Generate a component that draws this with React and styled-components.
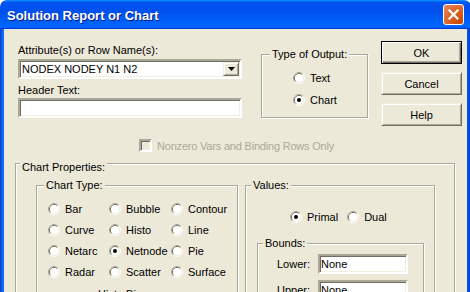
import React from "react";
import styled, { createGlobalStyle, css } from "styled-components";

const GlobalStyle = createGlobalStyle`
  html, body {
    margin: 0;
    padding: 0;
    overflow: hidden;
    background: #ffffff;
  }
  body {
    font-family: "Liberation Sans", Arial, sans-serif;
    font-size: 11px;
  }
`;

// classic 3d edges with the xp colour scheme
const sunken = css`
  box-sizing: border-box;
  border: 2px solid;
  border-color: #aca899 #ffffff #ffffff #aca899;
  box-shadow: inset 1px 1px 0 #716f64, inset -1px -1px 0 #f1efe2;
`;

const raised = css`
  box-sizing: border-box;
  border: 1px solid;
  border-color: #f1efe2 #716f64 #716f64 #f1efe2;
  box-shadow: inset 1px 1px 0 #ffffff, inset -1px -1px 0 #aca899;
  background: #ece9d8;
`;

const Radio = ({ checked }) => (
  <RadioIcon viewBox="0 0 12 12" width="12" height="12">
    <path d="M2.11 9.89 A5.5 5.5 0 0 1 9.89 2.11" stroke="#aca899" fill="none" />
    <path d="M9.89 2.11 A5.5 5.5 0 0 1 2.11 9.89" stroke="#ffffff" fill="none" />
    <path d="M2.82 9.18 A4.5 4.5 0 0 1 9.18 2.82" stroke="#716f64" fill="none" />
    <path d="M9.18 2.82 A4.5 4.5 0 0 1 2.82 9.18" stroke="#f1efe2" fill="none" />
    <circle cx="6" cy="6" r="4" fill="#ffffff" />
    {checked && <circle cx="6" cy="6" r="2" fill="#000000" />}
  </RadioIcon>
);

const Option = ({ label, checked }) => (
  <OptionRow>
    <Radio checked={checked} />
    <OptionText>{label}</OptionText>
  </OptionRow>
);

const chartTypes = [
  ["Bar", false],
  ["Bubble", false],
  ["Contour", false],
  ["Curve", false],
  ["Histo", false],
  ["Line", false],
  ["Netarc", false],
  ["Netnode", true],
  ["Pie", false],
  ["Radar", false],
  ["Scatter", false],
  ["Surface", false],
];

const App = () => {
  return (
    <>
      <GlobalStyle />
      <Window>
        <TitleBar>
          <Title>Solution Report or Chart</Title>
          <CloseButton>
            <svg viewBox="0 0 21 21" width="21" height="21">
              <path
                d="M6.5 6.5 L14.5 14.5 M14.5 6.5 L6.5 14.5"
                stroke="#ffffff"
                strokeWidth="2.2"
                strokeLinecap="square"
              />
            </svg>
          </CloseButton>
        </TitleBar>
        <Frame>
          <Client>
            <TopRow>
              <LeftCol>
                <Label>Attribute(s) or Row Name(s):</Label>
                <Combo>
                  <ComboText>NODEX NODEY N1 N2</ComboText>
                  <DropButton>
                    <svg viewBox="0 0 7 4" width="7" height="4">
                      <path d="M0 0 H7 L3.5 4 Z" fill="#000000" />
                    </svg>
                  </DropButton>
                </Combo>
                <Label $gap={5}>Header Text:</Label>
                <TextField $gap={1} />
              </LeftCol>

              <OutputGroup>
                <Legend $indent={8}>Type of Output:</Legend>
                <OutputList>
                  <Option label="Text" />
                  <Option label="Chart" checked />
                </OutputList>
              </OutputGroup>

              <ButtonCol>
                <Button $default>OK</Button>
                <Button>Cancel</Button>
                <Button>Help</Button>
              </ButtonCol>
            </TopRow>

            <CheckRow>
              <CheckBox />
              <DisabledText>Nonzero Vars and Binding Rows Only</DisabledText>
            </CheckRow>

            <PropsGroup>
              <Legend $indent={4} $drop={4}>
                Chart Properties:
              </Legend>
              <PropsBody>
                <ChartTypeGroup>
                  <Legend $indent={7}>Chart Type:</Legend>
                  <TypeGrid>
                    {chartTypes.map(([name, on]) => (
                      <Option key={name} label={name} checked={on} />
                    ))}
                  </TypeGrid>
                  <HistoRow>Histo Bins:</HistoRow>
                </ChartTypeGroup>

                <ValuesGroup>
                  <Legend $indent={5}>Values:</Legend>
                  <ValueRow>
                    <Option label="Primal" checked />
                    <Option label="Dual" />
                  </ValueRow>
                  <BoundsGroup>
                    <Legend $indent={5}>Bounds:</Legend>
                    <BoundsBody>
                      <BoundRow>
                        <BoundLabel>Lower:</BoundLabel>
                        <BoundInput>None</BoundInput>
                      </BoundRow>
                      <BoundRow>
                        <BoundLabel>Upper:</BoundLabel>
                        <BoundInput>None</BoundInput>
                      </BoundRow>
                    </BoundsBody>
                  </BoundsGroup>
                </ValuesGroup>
              </PropsBody>
            </PropsGroup>
          </Client>
        </Frame>
      </Window>
    </>
  );
};

const Window = styled.div`
  width: 471px;
  height: 292px;
  display: flex;
  flex-direction: column;
  overflow: hidden;
`;

const TitleBar = styled.div`
  height: 29px;
  flex-shrink: 0;
  display: flex;
  align-items: center;
  justify-content: space-between;
  padding: 0 7px 0 7px;
  box-sizing: border-box;
  border-radius: 7px 7px 0 0;
  background: linear-gradient(
    to bottom,
    #0997ff 0%,
    #0053ee 8%,
    #0050ee 40%,
    #0066ff 88%,
    #0066ff 93%,
    #005bff 95%,
    #003dd7 96%,
    #003dd7 100%
  );
`;

const Title = styled.div`
  color: #ffffff;
  font-family: "Liberation Sans", Arial, sans-serif;
  font-weight: bold;
  font-size: 13px;
  text-shadow: 1px 1px 0 #0a1883;
  padding-top: 1px;
`;

const CloseButton = styled.div`
  width: 21px;
  height: 21px;
  box-sizing: border-box;
  border: 1px solid #ffffff;
  border-radius: 3px;
  background: radial-gradient(
    circle at 90% 90%,
    #cc4600 0%,
    #dc6527 55%,
    #e38c6a 100%
  );
  display: flex;
  align-items: center;
  justify-content: center;
  svg {
    margin: -1px;
  }
`;

const Frame = styled.div`
  flex: 1;
  display: flex;
  padding: 0 4px;
  background: linear-gradient(
    to right,
    #0831d9 0px,
    #0855dd 1px,
    #166aee 3px,
    #0055ea calc(100% - 3px),
    #0831d9 100%
  );
`;

const Client = styled.div`
  flex: 1;
  background: #ece9d8;
  display: flex;
  flex-direction: column;
`;

const TopRow = styled.div`
  display: flex;
  align-items: flex-start;
  padding: 12px 0 0 14px;
`;

const LeftCol = styled.div`
  width: 224px;
  margin-top: 3px;
  display: flex;
  flex-direction: column;
`;

const Label = styled.div`
  height: 13px;
  line-height: 13px;
  color: #000000;
  margin-top: ${(p) => p.$gap || 0}px;
`;

const Combo = styled.div`
  ${sunken};
  margin-top: 2px;
  height: 20px;
  background: #ffffff;
  display: flex;
  align-items: stretch;
  padding: 1px;
`;

const ComboText = styled.div`
  flex: 1;
  line-height: 14px;
  padding-left: 1px;
  color: #000000;
`;

const DropButton = styled.div`
  ${raised};
  width: 16px;
  display: flex;
  align-items: center;
  justify-content: center;
`;

const TextField = styled.div`
  ${sunken};
  margin-top: ${(p) => p.$gap || 0}px;
  height: 20px;
  background: #ffffff;
`;

const Fieldset = styled.fieldset`
  margin: 0;
  padding: 0;
  min-width: 0;
  box-sizing: border-box;
  border: 1px solid #aca899;
  box-shadow: inset 1px 1px 0 #ffffff, 1px 1px 0 #ffffff;
`;

const Legend = styled.legend`
  padding: 0 2px;
  margin-left: ${(p) => p.$indent}px;
  line-height: 13px;
  font-size: 11px;
  background: #ece9d8;
  color: #000000;
  position: relative;
  top: ${(p) => p.$drop || 0}px;
`;

const OutputGroup = styled(Fieldset)`
  width: 107px;
  height: 70px;
  margin-left: 19px;
  margin-top: 7px;
`;

const OutputList = styled.div`
  display: flex;
  flex-direction: column;
  gap: 6px;
  padding: 9px 0 0 31px;
`;

const OptionRow = styled.div`
  display: flex;
  align-items: center;
  height: 16px;
`;

const RadioIcon = styled.svg`
  flex-shrink: 0;
  display: block;
`;

const OptionText = styled.span`
  margin-left: 5px;
  color: #000000;
  white-space: nowrap;
`;

const ButtonCol = styled.div`
  margin-left: 13px;
  display: flex;
  flex-direction: column;
  gap: 8px;
`;

const Button = styled.div`
  ${raised};
  width: 81px;
  height: 23px;
  display: flex;
  align-items: center;
  justify-content: center;
  color: #000000;
  ${(p) =>
    p.$default &&
    css`
      border: 1px solid #000000;
      box-shadow: inset 1px 1px 0 #ffffff, inset -1px -1px 0 #716f64,
        inset -2px -2px 0 #aca899;
    `}
`;

const CheckRow = styled.div`
  display: flex;
  align-items: center;
  height: 13px;
  margin-top: 13px;
  padding-left: 135px;
`;

const CheckBox = styled.div`
  ${sunken};
  width: 13px;
  height: 13px;
  background: #ece9d8;
`;

const DisabledText = styled.span`
  margin-left: 5px;
  color: #aca899;
  letter-spacing: -0.2px;
`;

const PropsGroup = styled(Fieldset)`
  width: 440px;
  margin: 5px 0 0 11px;
  flex: 1;
`;

const PropsBody = styled.div`
  display: flex;
  align-items: flex-start;
  gap: 7px;
  padding: 9px 0 0 20px;
`;

const ChartTypeGroup = styled(Fieldset)`
  width: 202px;
  height: 130px;
`;

const TypeGrid = styled.div`
  display: grid;
  grid-template-columns: 61px 62px auto;
  row-gap: 5px;
  padding: 9px 0 0 11px;
`;

const HistoRow = styled.div`
  margin: 8px 0 0 61px;
  line-height: 13px;
  color: #000000;
`;

const ValuesGroup = styled(Fieldset)`
  width: 190px;
  height: 130px;
`;

const ValueRow = styled.div`
  display: flex;
  gap: 9px;
  padding: 17px 0 0 44px;
`;

const BoundsGroup = styled(Fieldset)`
  width: 167px;
  height: 80px;
  margin: 12px 0 0 11px;
`;

const BoundsBody = styled.div`
  display: flex;
  flex-direction: column;
  gap: 6px;
  padding-top: 4px;
`;

const BoundRow = styled.div`
  display: flex;
  align-items: center;
`;

const BoundLabel = styled.span`
  width: 52px;
  text-align: right;
  color: #000000;
`;

const BoundInput = styled.div`
  ${sunken};
  width: 90px;
  height: 20px;
  margin-left: 8px;
  background: #ffffff;
  line-height: 16px;
  padding-left: 1px;
  color: #000000;
`;

export default App;
